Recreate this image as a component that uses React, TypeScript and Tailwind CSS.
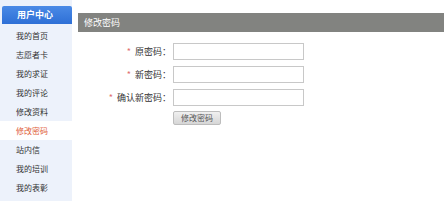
const menu = ["我的首页", "志愿者卡", "我的求证", "我的评论", "修改资料", "修改密码", "站内信", "我的培训", "我的表彰"]

function Field({ label }: { label: string }) {
  return (
    <div className="flex items-center h-[17px]">
      <div className="w-[95px] pr-[2px] text-right text-[9px] text-[#333] leading-none">
        <span className="text-[#e07070] mr-[4px]">*</span>
        {label}：
      </div>
      <input type="password" className="w-[131px] h-[17px] border border-[#c8c8c8] bg-white outline-none" />
    </div>
  )
}

export default function App() {
  return (
    <div className="w-[444px] h-[210px] bg-white flex" style={{ fontFamily: '"Noto Sans CJK SC", "Noto Sans", sans-serif' }}>
      {/* sidebar */}
      <div className="w-[72px] h-[201px] bg-[#edf2fb] pt-[6px]">
        <div className="ml-[2px] h-[18px] bg-gradient-to-b from-[#4a8ae6] to-[#2e6fd6] rounded-t-[2px] text-white font-bold text-[9px] flex items-center pl-[15px]">
          用户中心
        </div>
        <div className="flex flex-col pt-[2px]">
          {menu.map((m) => (
            <div
              key={m}
              className={`h-[19px] flex items-center pl-[16px] text-[8px] ${
                m === "修改密码" ? "bg-white text-[#e0603a]" : "text-[#333]"
              }`}
            >
              {m}
            </div>
          ))}
        </div>
      </div>

      {/* main */}
      <div className="flex-1 ml-[6px] pt-[13px]">
        <div className="h-[19px] bg-[#828380] text-white text-[9px] flex items-center pl-[6px]">修改密码</div>
        <div className="flex flex-col gap-[6px] mt-[11px]">
          <Field label="原密码" />
          <Field label="新密码" />
          <Field label="确认新密码" />
          <div className="flex mt-[-1px]">
            <div className="w-[95px]" />
            <button className="w-[48px] h-[14px] border border-[#bdbdbd] rounded-[2px] bg-gradient-to-b from-[#f0f0f0] to-[#d6d6d6] text-[8px] text-[#555] leading-none">
              修改密码
            </button>
          </div>
        </div>
      </div>
    </div>
  )
}
